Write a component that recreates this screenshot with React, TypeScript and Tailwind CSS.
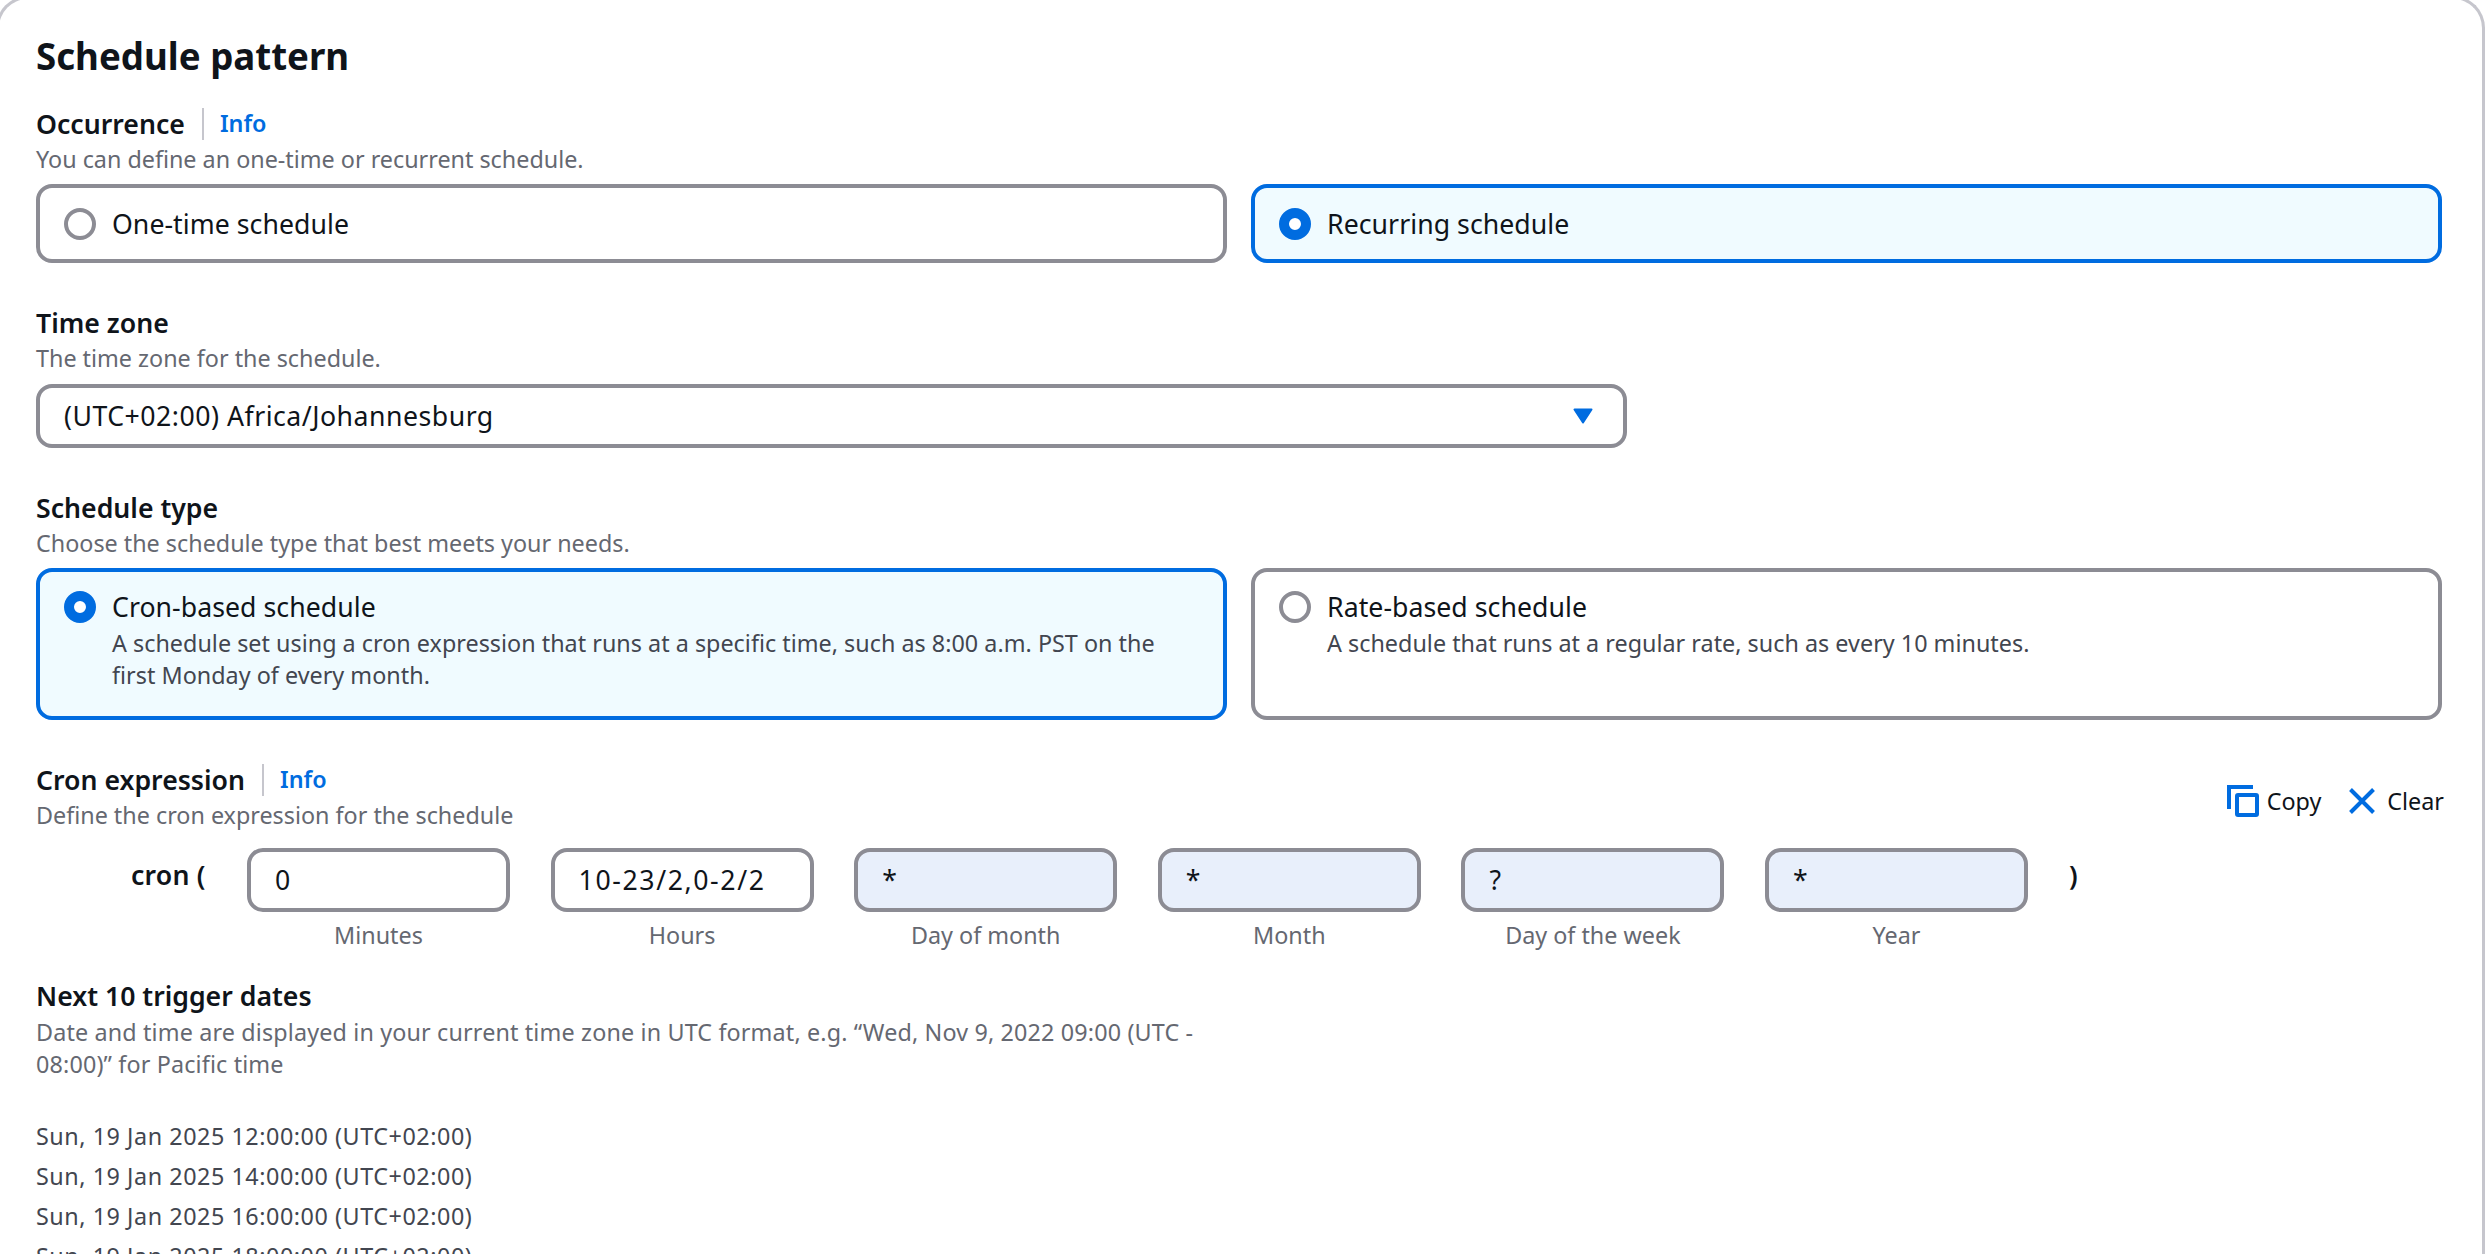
import React from "react";

const dates = [
    "Sun, 19 Jan 2025 12:00:00 (UTC+02:00)",
    "Sun, 19 Jan 2025 14:00:00 (UTC+02:00)",
    "Sun, 19 Jan 2025 16:00:00 (UTC+02:00)",
    "Sun, 19 Jan 2025 18:00:00 (UTC+02:00)",
];

const cronFields = [
    { label: "Minutes", value: "0", filled: false },
    { label: "Hours", value: "10-23/2,0-2/2", filled: false },
    { label: "Day of month", value: "*", filled: true },
    { label: "Month", value: "*", filled: true },
    { label: "Day of the week", value: "?", filled: true },
    { label: "Year", value: "*", filled: true },
];

const Radio = ({ checked }: { checked: boolean }) =>
    checked ? (
        <span className="w-[32px] h-[32px] shrink-0 rounded-full border-[10px] border-[#006ce0] bg-white" />
    ) : (
        <span className="w-[32px] h-[32px] shrink-0 rounded-full border-[4px] border-[#8c8c94] bg-white" />
    );

const Tile = ({ checked, title, desc }: { checked: boolean; title: string; desc?: string }) => (
    <div
        className={`flex-1 flex gap-[16px] px-[24px] rounded-[16px] border-[4px] ${
            desc ? "h-[152px] items-start pt-[17px]" : "h-[79px] items-center"
        } ${checked ? "border-[#006ce0] bg-[#f0fbff]" : "border-[#8c8c94] bg-white"}`}
    >
        <div className={desc ? "flex mt-[2px]" : "flex"}>
            <Radio checked={checked} />
        </div>
        <div className="flex flex-col">
            <div className="text-[26.67px] leading-[35px] tracking-[0.05px] text-[#0f141a]">{title}</div>
            {desc && <div className="text-[23.33px] leading-[32px] tracking-[0.02px] text-[#424650] mt-[3px]">{desc}</div>}
        </div>
    </div>
);

const Label = ({ text, info }: { text: string; info?: boolean }) => (
    <div className="flex items-center h-[35px]">
        <span className="text-[26.67px] leading-[35px] font-semibold text-[#0f141a]">{text}</span>
        {info && (
            <>
                <span className="w-[2px] h-[32px] bg-[#c6c6cd] ml-[17px] mr-[16px]" />
                <span className="text-[23.33px] leading-[35px] font-semibold text-[#006ce0]">Info</span>
            </>
        )}
    </div>
);

const Desc = ({ children }: { children: React.ReactNode }) => (
    <div className="text-[23.33px] leading-[37px] text-[#656871]">{children}</div>
);

export default function App() {
    return (
        <div className="h-[1254px] overflow-hidden bg-white font-['Noto_Sans',sans-serif]">
            <div className="w-[2489px] h-[1300px] -mt-[4px] -ml-[4px] pl-[37px] pr-[40px] pt-[33px] border-t-[3px] border-x-[3px] border-[#c6c6cd] rounded-t-[32px]">
                <h2 className="text-[36.67px] leading-[48px] font-bold text-[#0f141a]">Schedule pattern</h2>

                <div className="mt-[26px]">
                    <Label text="Occurrence" info />
                    <Desc>You can define an one-time or recurrent schedule.</Desc>
                    <div className="flex gap-[24px] mt-[6px]">
                        <Tile checked={false} title="One-time schedule" />
                        <Tile checked title="Recurring schedule" />
                    </div>
                </div>

                <div className="mt-[42px]">
                    <Label text="Time zone" />
                    <Desc>The time zone for the schedule.</Desc>
                    <div className="w-[1591px] h-[64px] mt-[7px] flex items-center justify-between pl-[24px] pr-[30px] rounded-[16px] border-[4px] border-[#8c8c94]">
                        <span className="text-[26.67px] tracking-[0.5px] text-[#0f141a]">(UTC+02:00) Africa/Johannesburg</span>
                        <svg width="20" height="16" viewBox="0 0 20 16">
                            <path d="M1.5 1.5h17L10 14.5z" fill="#006ce0" stroke="#006ce0" strokeWidth="2" strokeLinejoin="round" />
                        </svg>
                    </div>
                </div>

                <div className="mt-[42px]">
                    <Label text="Schedule type" />
                    <Desc>Choose the schedule type that best meets your needs.</Desc>
                    <div className="flex gap-[24px] mt-[6px]">
                        <Tile
                            checked
                            title="Cron-based schedule"
                            desc="A schedule set using a cron expression that runs at a specific time, such as 8:00 a.m. PST on the first Monday of every month."
                        />
                        <Tile
                            checked={false}
                            title="Rate-based schedule"
                            desc="A schedule that runs at a regular rate, such as every 10 minutes."
                        />
                    </div>
                </div>

                <div className="mt-[42px] flex justify-between items-start">
                    <div>
                        <Label text="Cron expression" info />
                        <Desc>Define the cron expression for the schedule</Desc>
                    </div>
                    <div className="flex items-center mt-[22px] -mr-[2px] text-[23.33px] text-[#0f141a]">
                        <svg width="32" height="32" viewBox="0 0 32 32" fill="none" stroke="#006ce0" strokeWidth="4">
                            <path d="M2 24V2h24" />
                            <rect x="10" y="10" width="20" height="20" rx="1" />
                        </svg>
                        <span className="ml-[8px]">Copy</span>
                        <svg className="ml-[28px]" width="26" height="26" viewBox="0 0 26 26" fill="none" stroke="#006ce0" strokeWidth="4">
                            <path d="M1.5 1.5l23 23M24.5 1.5l-23 23" />
                        </svg>
                        <span className="ml-[12px]">Clear</span>
                    </div>
                </div>

                <div className="flex mt-[14px]">
                    <div className="w-[211px] pl-[95px] pt-[3px] text-[26.67px] leading-[48px] font-semibold tracking-[0.2px] text-[#0f141a]">cron (</div>
                    <div className="flex gap-[40.6px]">
                        {cronFields.map((field) => (
                            <div key={field.label} className="w-[263px] flex flex-col items-center">
                                <div
                                    className={`w-full h-[64px] flex items-center px-[24px] rounded-[16px] border-[4px] border-[#8c8c94] text-[26.67px] tracking-[1.6px] text-[#0f141a] ${
                                        field.filled ? "bg-[#e8effb]" : "bg-white"
                                    }`}
                                >
                                    {field.value}
                                </div>
                                <div className="mt-[6px] text-[23.33px] leading-[35px] text-[#656871]">{field.label}</div>
                            </div>
                        ))}
                    </div>
                    <div className="ml-[41px] pt-[3px] text-[26.67px] leading-[48px] font-semibold text-[#0f141a]">)</div>
                </div>

                <div className="mt-[25px]">
                    <Label text="Next 10 trigger dates" />
                    <div className="mt-[3px] text-[23.33px] leading-[32px] tracking-[0.15px] text-[#656871]">
                        Date and time are displayed in your current time zone in UTC format, e.g. “Wed, Nov 9, 2022 09:00 (UTC -
                        <br />
                        08:00)” for Pacific time
                    </div>
                </div>

                <div className="mt-[36px]">
                    {dates.map((date) => (
                        <div key={date} className="text-[23.33px] leading-[40px] tracking-[0.55px] text-[#424650]">
                            {date}
                        </div>
                    ))}
                </div>
            </div>
        </div>
    );
}
